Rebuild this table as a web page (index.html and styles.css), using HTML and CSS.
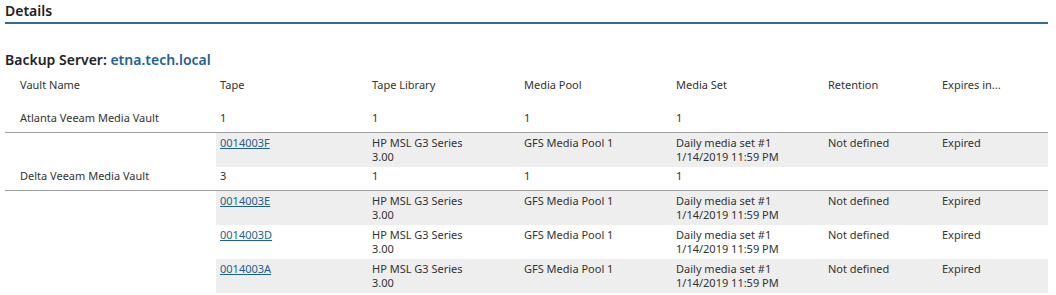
FILE: index.html
```html
<!DOCTYPE html>
<html>
<head>
<meta charset="utf-8">
<link rel="stylesheet" href="styles.css">
</head>
<body>
<div class="page">
  <h2 class="title">Details</h2>
  <div class="server">Backup Server: <span class="host">etna.tech.local</span></div>

  <div class="row head">
    <div class="cell first">Vault Name</div>
    <div class="cell">Tape</div>
    <div class="cell">Tape Library</div>
    <div class="cell">Media Pool</div>
    <div class="cell">Media Set</div>
    <div class="cell">Retention</div>
    <div class="cell">Expires in...</div>
  </div>

  <div class="vault first-vault">
    <div class="row vault-row">
      <div class="cell first">Atlanta Veeam Media Vault</div>
      <div class="cell">1</div>
      <div class="cell">1</div>
      <div class="cell">1</div>
      <div class="cell">1</div>
      <div class="cell"></div>
      <div class="cell"></div>
    </div>
    <div class="tapes">
      <div class="tape-row shade">
        <div class="cell"><a href="#" class="link">0014003F</a></div>
        <div class="cell">HP MSL G3 Series<br>3.00</div>
        <div class="cell">GFS Media Pool 1</div>
        <div class="cell">Daily media set #1<br>1/14/2019 11:59 PM</div>
        <div class="cell">Not defined</div>
        <div class="cell">Expired</div>
      </div>
    </div>
  </div>

  <div class="vault">
    <div class="row vault-row">
      <div class="cell first">Delta Veeam Media Vault</div>
      <div class="cell">3</div>
      <div class="cell">1</div>
      <div class="cell">1</div>
      <div class="cell">1</div>
      <div class="cell"></div>
      <div class="cell"></div>
    </div>
    <div class="tapes">
      <div class="tape-row shade">
        <div class="cell"><a href="#" class="link">0014003E</a></div>
        <div class="cell">HP MSL G3 Series<br>3.00</div>
        <div class="cell">GFS Media Pool 1</div>
        <div class="cell">Daily media set #1<br>1/14/2019 11:59 PM</div>
        <div class="cell">Not defined</div>
        <div class="cell">Expired</div>
      </div>
      <div class="tape-row">
        <div class="cell"><a href="#" class="link">0014003D</a></div>
        <div class="cell">HP MSL G3 Series<br>3.00</div>
        <div class="cell">GFS Media Pool 1</div>
        <div class="cell">Daily media set #1<br>1/14/2019 11:59 PM</div>
        <div class="cell">Not defined</div>
        <div class="cell">Expired</div>
      </div>
      <div class="tape-row shade">
        <div class="cell"><a href="#" class="link">0014003A</a></div>
        <div class="cell">HP MSL G3 Series<br>3.00</div>
        <div class="cell">GFS Media Pool 1</div>
        <div class="cell">Daily media set #1<br>1/14/2019 11:59 PM</div>
        <div class="cell">Not defined</div>
        <div class="cell">Expired</div>
      </div>
    </div>
  </div>
</div>
</body>
</html>
```

FILE: styles.css
```css
html, body {
  margin: 0;
  padding: 0;
  background: #ffffff;
}

body {
  font-family: "Noto Sans", "Open Sans", sans-serif;
  font-size: 11px;
  color: #333333;
}

.page {
  margin: 0 8px 0 5px;
}

.title {
  margin: 0;
  padding-top: 2px;
  font-size: 14px;
  font-weight: 600;
  line-height: 18px;
  color: #222222;
  border-bottom: 2px solid #336b93;
  padding-bottom: 2px;
}

.server {
  margin-top: 26px;
  font-size: 14px;
  font-weight: 600;
  line-height: 20px;
  color: #222222;
}

.host {
  color: #1f6391;
}

.row {
  display: grid;
  grid-template-columns: 211px 152px 152px 152px 152px 114px 110px;
}

.tape-row {
  display: grid;
  grid-template-columns: 152px 152px 152px 152px 114px 110px;
  margin-left: 211px;
  padding: 3px 0 3px;
  line-height: 14px;
}

.shade {
  background: #eeeeee;
}

.cell {
  padding-left: 4px;
  line-height: 14px;
}

.cell.first {
  padding-left: 15px;
}

.head {
  margin-top: 6px;
  height: 18px;
  align-items: center;
}

.vault-row {
  padding: 2px 0 7px;
  border-bottom: 1px solid #a0a0a0;
}

.first-vault .vault-row {
  margin-top: 15px;
}

.link {
  color: #1f5f8b;
  text-decoration: underline;
}
```
